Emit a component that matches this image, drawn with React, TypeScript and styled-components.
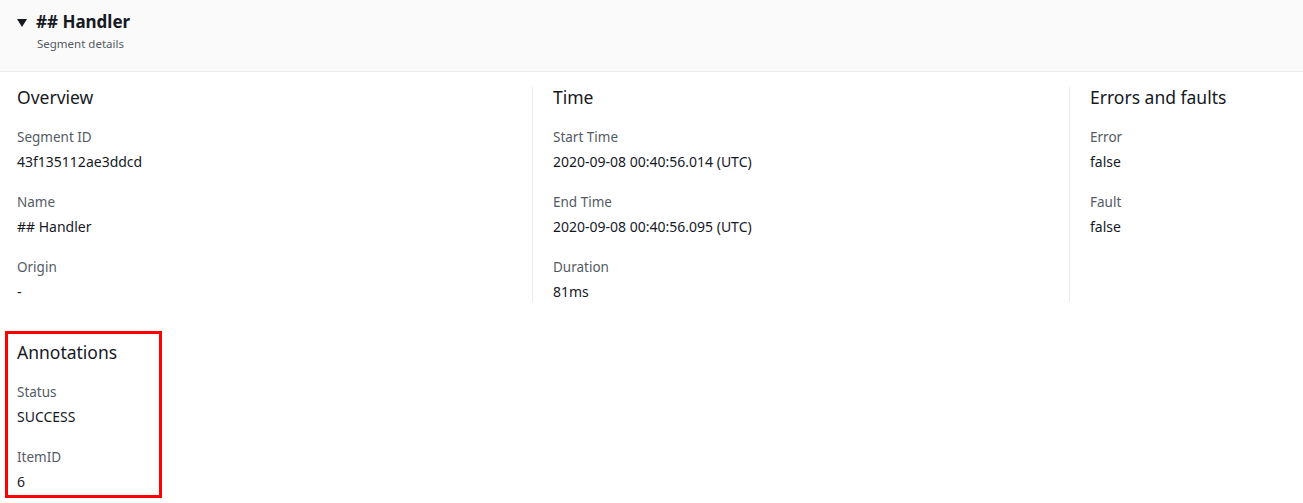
import styled, { createGlobalStyle } from 'styled-components';

const GlobalStyle = createGlobalStyle`
    body {
        margin: 0;
        background: #ffffff;
        font-family: "Noto Sans", "Open Sans", Arial, sans-serif;
        color: #16191f;
    }
`;

const Header = styled.div`
    box-sizing: border-box;
    height: 72px;
    padding: 11px 17px 0 17px;
    background-color: #fafafa;
    border-bottom: 1px solid #eaeded;
`;
const TitleRow = styled.div`
    display: flex;
    align-items: center;
    gap: 9px;
`;
const Caret = styled.span`
    width: 0;
    height: 0;
    border-left: 5px solid transparent;
    border-right: 5px solid transparent;
    border-top: 8px solid #16191f;
    margin-top: 1px;
`;
const Title = styled.h2`
    margin: 0;
    font-size: 17px;
    line-height: 22px;
    font-weight: 700;
`;
const Subtitle = styled.div`
    margin: 0 0 0 20px;
    padding-top: 1px;
    font-size: 11.5px;
    line-height: 20px;
    color: #545b64;
`;
const Columns = styled.div`
    display: grid;
    grid-template-columns: 532px 537px 1fr;
    padding-top: 15px;
`;
const Column = styled.div<{ $divider?: boolean }>`
    padding-left: ${(p) => (p.$divider ? '20px' : '17px')};
    border-left: ${(p) => (p.$divider ? '1px solid #eaeded' : 'none')};
`;
const Heading = styled.h3`
    margin: 0 0 20px 0;
    font-size: 17.5px;
    line-height: 20px;
    font-weight: 400;
`;
const Field = styled.div`
    & + & {
        margin-top: 20px;
    }
`;
const Label = styled.div`
    font-size: 13.5px;
    line-height: 20px;
    color: #545b64;
    margin-bottom: 5px;
`;
const Value = styled.div`
    font-size: 14px;
    line-height: 20px;
    color: #16191f;
`;
const Highlight = styled.div`
    box-sizing: border-box;
    width: 157px;
    margin: 29px 0 0 5px;
    padding: 8px 9px 3px 9px;
    border: 3px solid #ff0000;
`;

type Item = { label: string; value: string };

const sections: { title: string; items: Item[] }[] = [
    {
        title: 'Overview',
        items: [
            { label: 'Segment ID', value: '43f135112ae3ddcd' },
            { label: 'Name', value: '## Handler' },
            { label: 'Origin', value: '-' },
        ],
    },
    {
        title: 'Time',
        items: [
            { label: 'Start Time', value: '2020-09-08 00:40:56.014 (UTC)' },
            { label: 'End Time', value: '2020-09-08 00:40:56.095 (UTC)' },
            { label: 'Duration', value: '81ms' },
        ],
    },
    {
        title: 'Errors and faults',
        items: [
            { label: 'Error', value: 'false' },
            { label: 'Fault', value: 'false' },
        ],
    },
];

const annotations: Item[] = [
    { label: 'Status', value: 'SUCCESS' },
    { label: 'ItemID', value: '6' },
];

function Fields({ items }: { items: Item[] }) {
    return (
        <>
            {items.map((it) => (
                <Field key={it.label}>
                    <Label>{it.label}</Label>
                    <Value>{it.value}</Value>
                </Field>
            ))}
        </>
    );
}

export default function App() {
    return (
        <>
            <GlobalStyle />
            <Header>
                <TitleRow>
                    <Caret />
                    <Title>## Handler</Title>
                </TitleRow>
                <Subtitle>Segment details</Subtitle>
            </Header>
            <Columns>
                {sections.map((s, i) => (
                    <Column key={s.title} $divider={i > 0}>
                        <Heading>{s.title}</Heading>
                        <Fields items={s.items} />
                    </Column>
                ))}
            </Columns>
            <Highlight>
                <Heading>Annotations</Heading>
                <Fields items={annotations} />
            </Highlight>
        </>
    );
}
